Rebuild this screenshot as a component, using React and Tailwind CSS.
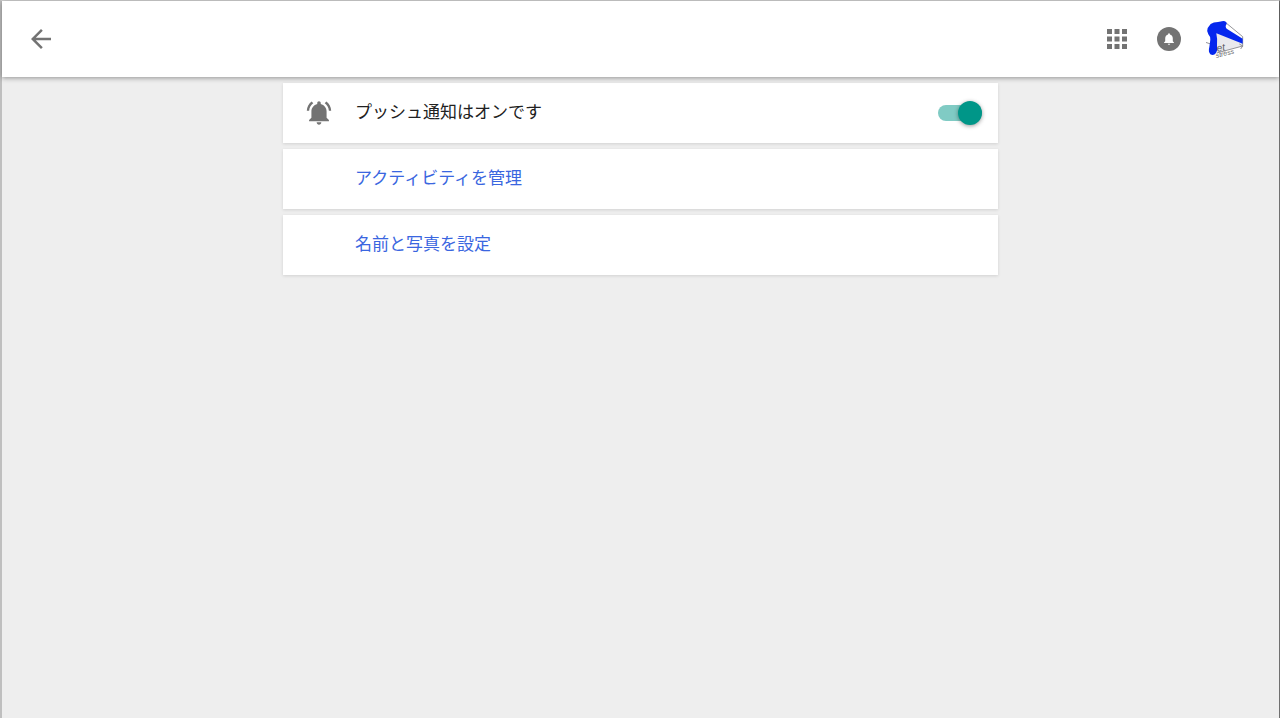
import { useState } from 'react';
import { MdApps, MdArrowBack } from 'react-icons/md';

const links = [
  { id: 'activity', label: 'アクティビティを管理' },
  { id: 'profile', label: '名前と写真を設定' },
];

const BELL_PATH =
  'M11.5 22c1.1 0 2-.9 2-2h-4c0 1.1.9 2 2 2zm6.5-6v-5.5c0-3.07-2.13-5.64-5-6.32V3.5c0-.83-.67-1.5-1.5-1.5S10 2.67 10 3.5v.68c-2.87.68-5 3.25-5 6.32V16l-2 2v1h17v-1l-2-2z';
const RINGING_PATH =
  'M6.58 3.58L5.15 2.15C2.76 3.97 1.18 6.8 1.03 10h2c.15-2.65 1.51-4.97 3.55-6.42zM19.97 10h2c-.15-3.2-1.73-6.03-4.13-7.85l-1.42 1.43c2.02 1.45 3.39 3.77 3.55 6.42z';

function BellIcon({ ringing = false, className }) {
  return (
    <svg viewBox="-0.5 0 24 24" fill="currentColor" className={className} aria-hidden="true">
      <path d={BELL_PATH} />
      {ringing && <path d={RINGING_PATH} />}
    </svg>
  );
}

function Avatar() {
  return (
    <svg viewBox="6 3 114 114" className="size-[38px]" aria-hidden="true">
      <path d="M37 42 L115 73 L113 82 L39 102 Z" fill="#e9e9ed" />
      <path d="M64 10 L116 53 V82 M5 70 L20 75 M38 102 L116 81 M106 75 L116 81 L110 90" fill="none" stroke="#808086" strokeWidth="2.5" />
      <path
        d="M20 15 Q28 9 42 9 L58 6 Q69 7 68 15 Q62 22 68 29 L116 59 V74 L37 43 Q41 62 39 80 Q42 92 36 102 Q29 112 19 106 Q12 98 16 84 L19 62 Q19 52 13 46 Q7 36 11 27 Z"
        fill="#0527ee"
      />
      <g fill="#5c5c62" fontFamily="Liberation Sans, sans-serif" fontStyle="italic">
        <text x="40" y="98" fontSize="30" transform="rotate(-10 40 98)">et</text>
        <text x="37" y="117" fontSize="21" transform="rotate(-14 37 117)">stress</text>
      </g>
    </svg>
  );
}

function Card({ children }) {
  return (
    <div className="flex h-15 items-center bg-white pr-4 shadow-[0_1px_3px_rgba(0,0,0,0.12)]">
      {children}
    </div>
  );
}

export default function App() {
  const [pushEnabled, setPushEnabled] = useState(true);

  return (
    <div
      lang="ja"
      className="min-h-screen border-t border-r border-l-2 border-t-[#d4d4d4] border-r-[#707070] border-l-[#bfbfbf] bg-[#eeeeee] font-['Liberation_Sans','Noto_Sans_CJK_JP',sans-serif]"
    >
      <header className="relative flex h-19 items-center justify-between bg-white pr-[35px] pl-6 text-[#737373] shadow-[0_1px_5px_rgba(0,0,0,0.4)]">
        <button type="button" aria-label="戻る">
          <MdArrowBack className="size-[30px]" />
        </button>
        <div className="flex items-center gap-[25px]">
          <button type="button" aria-label="アプリ">
            <MdApps className="size-[30px]" />
          </button>
          <button
            type="button"
            aria-label="通知"
            className="flex size-6 items-center justify-center rounded-full bg-[#737373] text-white"
          >
            <BellIcon className="size-[14px]" />
          </button>
          <button type="button" aria-label="アカウント">
            <Avatar />
          </button>
        </div>
      </header>

      <main className="mx-auto flex max-w-[715px] flex-col gap-1.5 pt-1.5 text-[17px] leading-6">
        <Card>
          <span className="flex w-18 justify-center text-[#737373]">
            <BellIcon ringing className="size-7" />
          </span>
          <label htmlFor="push" className="flex-1 text-[#212121]">
            プッシュ通知はオンです
          </label>
          <input
            id="push"
            type="checkbox"
            role="switch"
            checked={pushEnabled}
            onChange={(e) => setPushEnabled(e.target.checked)}
            className="flex h-4 w-11 cursor-pointer appearance-none items-center rounded-full bg-[#bdbdbd] before:size-6 before:rounded-full before:bg-white before:shadow-[0_1px_4px_rgba(0,0,0,0.4)] checked:bg-[#80cbc4] checked:before:translate-x-5 checked:before:bg-[#009688]"
          />
        </Card>
        {links.map(({ id, label }) => (
          <Card key={id}>
            <a href={`#${id}`} className="flex-1 pl-18 text-[#3a66e0]">
              {label}
            </a>
          </Card>
        ))}
      </main>
    </div>
  );
}
